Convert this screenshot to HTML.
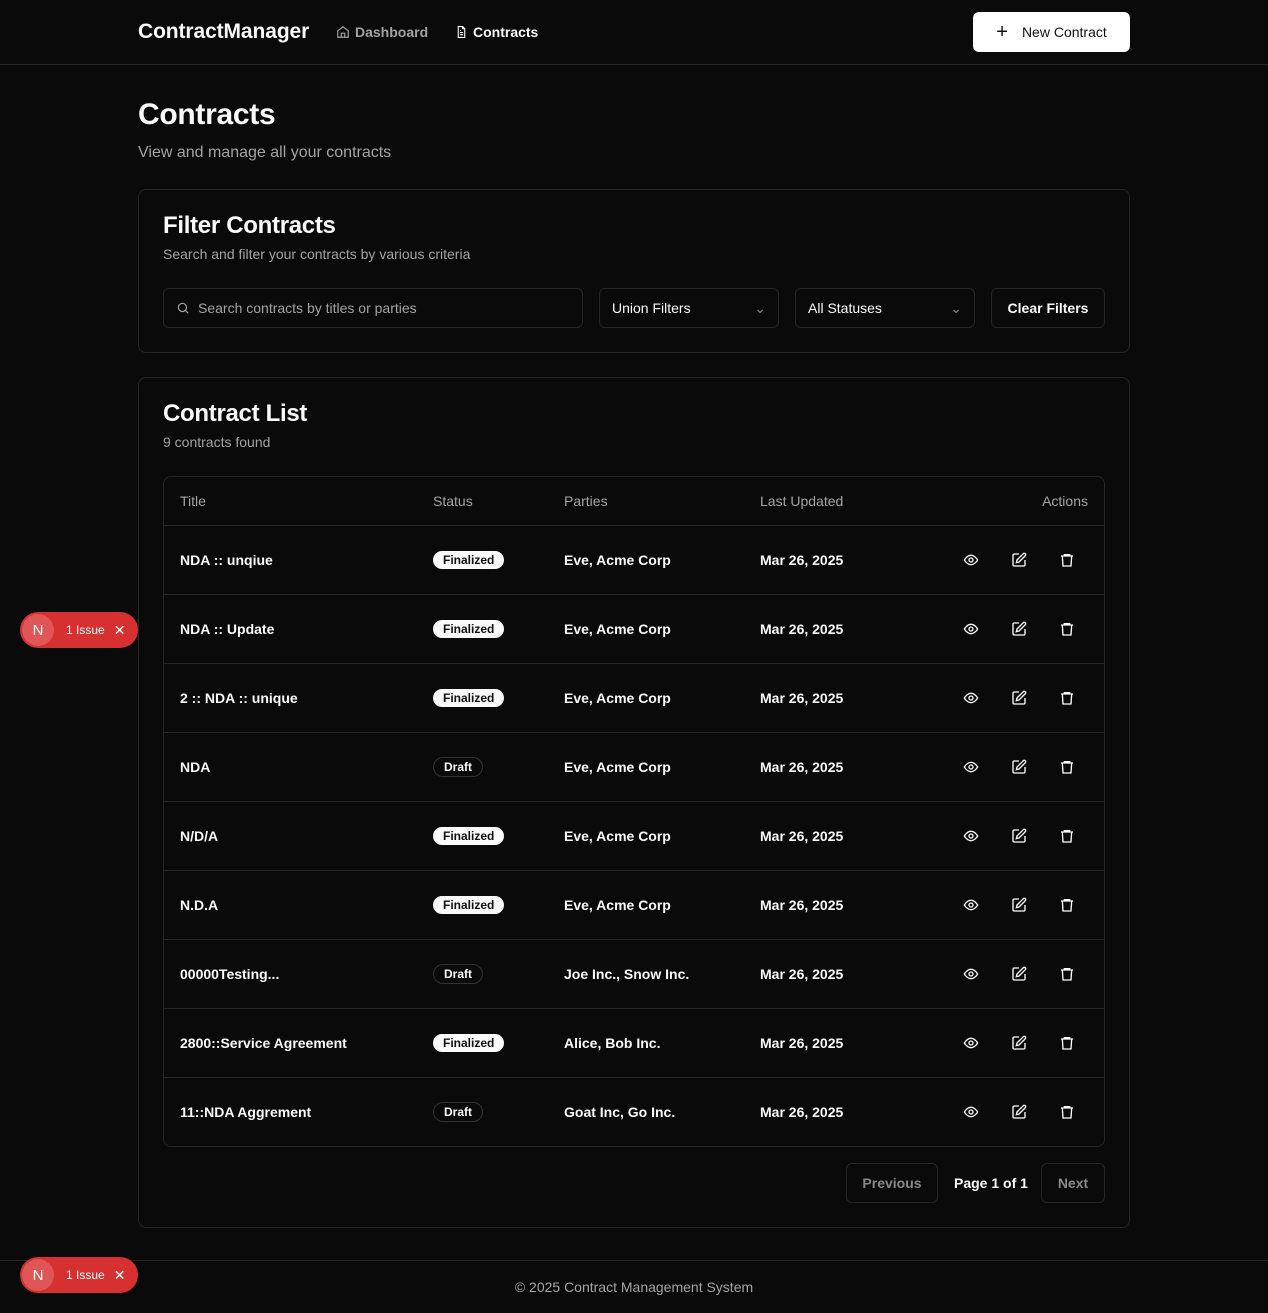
<!DOCTYPE html>
<html><head><meta charset="utf-8"><style>
*{box-sizing:border-box;margin:0;padding:0}
body{width:1268px;height:1313px;background:#0a0a0a;color:#fafafa;font-family:"Liberation Sans",sans-serif;position:relative;overflow:hidden}
.hdr{height:65px;border-bottom:1px solid #262626;position:relative}
.logo{position:absolute;left:138px;top:20px;font-size:21px;font-weight:700;letter-spacing:-.1px}
.nav{position:absolute;top:24px;font-size:14px;font-weight:700;display:flex;align-items:center;gap:5px}
.btn{position:absolute;left:973px;top:12px;width:157px;height:40px;background:#fff;color:#111;border-radius:6px;font-size:14px;display:flex;align-items:center;justify-content:center;gap:14px}
h1{position:absolute;left:138px;top:98px;font-size:30px;font-weight:700;letter-spacing:-.3px}
.sub{position:absolute;left:138px;top:144px;font-size:16px;color:#a3a3a3}
.card{position:absolute;left:138px;width:992px;border:1px solid #262626;border-radius:8px}
.card h2{position:absolute;left:24px;font-size:24px;font-weight:700;letter-spacing:-.3px}
.card .d{position:absolute;left:24px;font-size:14px;color:#a3a3a3}
.in{position:absolute;top:98px;height:40px;border:1px solid #262626;border-radius:6px;font-size:14px;display:flex;align-items:center;padding:0 12px}
table{position:absolute;left:24px;top:98px;width:942px;border:1px solid #262626;border-radius:8px;border-collapse:separate;border-spacing:0;font-size:14px}
td,th{border-bottom:1px solid #262626;text-align:left;padding:0 0 0 16px;height:69px;font-weight:700}
th{height:49px;color:#a3a3a3;font-weight:400}
tr:last-child td{border-bottom:none;height:68px}
.b{display:inline-block;font-size:12px;font-weight:700;padding:2px 10px;border-radius:10px;background:#fafafa;color:#111}
.b.dr{background:none;color:#fafafa;border:1px solid #333}
.ic{display:flex;justify-content:flex-end;gap:32px;padding-right:29px}
.pg{position:absolute;top:785px;height:40px;border:1px solid #262626;border-radius:6px;font-size:14px;display:flex;align-items:center;justify-content:center;color:#888;font-weight:700}
.iss{position:absolute;left:20px;width:118px;height:36px;background:#d63031;border-radius:18px;font-size:12px;color:#fff;display:flex;align-items:center}
.iss .n{width:32px;height:32px;border-radius:16px;background:#e05555;margin-left:2px;display:flex;align-items:center;justify-content:center;font-size:15px}
</style></head><body>
<div class="hdr">
<div class="logo">ContractManager</div>
<div class="nav" style="left:336px;color:#a3a3a3"><svg width="14" height="14" viewBox="0 0 24 24" fill="none" stroke="#a3a3a3" stroke-width="2"><path d="M3 10l9-7 9 7v11H3z"/><path d="M9 21v-7h6v7"/></svg>Dashboard</div>
<div class="nav" style="left:455px"><svg width="13" height="14" viewBox="0 0 24 24" fill="none" stroke="#fff" stroke-width="2"><path d="M14 2H6v20h12V6z"/><path d="M14 2v4h4M9 13h6M9 17h6M9 9h2"/></svg>Contracts</div>
<div class="btn"><span style="font-size:20px;font-weight:300">+</span>New Contract</div>
</div>
<h1>Contracts</h1>
<div class="sub">View and manage all your contracts</div>
<div class="card" style="top:189px;height:164px">
<h2 style="top:22px">Filter Contracts</h2>
<div class="d" style="top:56px">Search and filter your contracts by various criteria</div>
<div class="in" style="left:24px;width:420px;color:#a3a3a3"><svg width="14" height="14" viewBox="0 0 24 24" fill="none" stroke="#a3a3a3" stroke-width="2" style="margin-right:8px"><circle cx="11" cy="11" r="7"/><path d="M21 21l-5-5"/></svg>Search contracts by titles or parties</div>
<div class="in" style="left:460px;width:180px;justify-content:space-between">Union Filters<span style="color:#888">⌄</span></div>
<div class="in" style="left:656px;width:180px;justify-content:space-between">All Statuses<span style="color:#888">⌄</span></div>
<div class="in" style="left:852px;width:114px;font-weight:700;justify-content:center">Clear Filters</div>
</div>
<div class="card" style="top:377px;height:851px">
<h2 style="top:22px">Contract List</h2>
<div class="d" style="top:56px">9 contracts found</div>
<table>
<tr><th style="width:253px">Title</th><th style="width:131px">Status</th><th style="width:196px">Parties</th><th style="width:180px">Last Updated</th><th style="text-align:right;padding-right:16px">Actions</th></tr>
<tr><td>NDA :: unqiue</td><td><span class="b">Finalized</span></td><td>Eve, Acme Corp</td><td>Mar 26, 2025</td><td>ICONS</td></tr>
<tr><td>NDA :: Update</td><td><span class="b">Finalized</span></td><td>Eve, Acme Corp</td><td>Mar 26, 2025</td><td>ICONS</td></tr>
<tr><td>2 :: NDA :: unique</td><td><span class="b">Finalized</span></td><td>Eve, Acme Corp</td><td>Mar 26, 2025</td><td>ICONS</td></tr>
<tr><td>NDA</td><td><span class="b dr">Draft</span></td><td>Eve, Acme Corp</td><td>Mar 26, 2025</td><td>ICONS</td></tr>
<tr><td>N/D/A</td><td><span class="b">Finalized</span></td><td>Eve, Acme Corp</td><td>Mar 26, 2025</td><td>ICONS</td></tr>
<tr><td>N.D.A</td><td><span class="b">Finalized</span></td><td>Eve, Acme Corp</td><td>Mar 26, 2025</td><td>ICONS</td></tr>
<tr><td>00000Testing...</td><td><span class="b dr">Draft</span></td><td>Joe Inc., Snow Inc.</td><td>Mar 26, 2025</td><td>ICONS</td></tr>
<tr><td>2800::Service Agreement</td><td><span class="b">Finalized</span></td><td>Alice, Bob Inc.</td><td>Mar 26, 2025</td><td>ICONS</td></tr>
<tr><td>11::NDA Aggrement</td><td><span class="b dr">Draft</span></td><td>Goat Inc, Go Inc.</td><td>Mar 26, 2025</td><td>ICONS</td></tr>
</table>
<div class="pg" style="left:707px;width:92px">Previous</div>
<div style="position:absolute;left:815px;top:797px;font-size:14px;font-weight:700">Page 1 of 1</div>
<div class="pg" style="left:902px;width:64px">Next</div>
</div>
<div style="position:absolute;left:0;top:1260px;width:1268px;border-top:1px solid #262626"></div>
<div style="position:absolute;left:0;width:1268px;top:1279px;text-align:center;font-size:14px;color:#a3a3a3">© 2025 Contract Management System</div>
<div class="iss" style="top:612px"><div class="n">N</div><span style="margin-left:12px">1 Issue</span><span style="margin-left:9px;font-size:14px">✕</span></div>
<div class="iss" style="top:1257px"><div class="n">N</div><span style="margin-left:12px">1 Issue</span><span style="margin-left:9px;font-size:14px">✕</span></div>
<script>
var ic='<div class="ic"><svg width="16" height="16" viewBox="0 0 24 24" fill="none" stroke="#fff" stroke-width="2"><path d="M2 12s4-7 10-7 10 7 10 7-4 7-10 7S2 12 2 12z"/><circle cx="12" cy="12" r="3"/></svg><svg width="16" height="16" viewBox="0 0 24 24" fill="none" stroke="#fff" stroke-width="2"><path d="M12 3H5a2 2 0 0 0-2 2v14a2 2 0 0 0 2 2h14a2 2 0 0 0 2-2v-7"/><path d="M18.4 2.6a2.1 2.1 0 0 1 3 3L12 15l-4 1 1-4z"/></svg><svg width="16" height="16" viewBox="0 0 24 24" fill="none" stroke="#fff" stroke-width="2"><path d="M3 6h18M8 6V4h8v2M5 6l1 15h12l1-15"/></svg></div>';
document.querySelectorAll('td').forEach(function(t){if(t.textContent=='ICONS'){t.innerHTML=ic;t.style.padding='0'}});
</script>
</body></html>
